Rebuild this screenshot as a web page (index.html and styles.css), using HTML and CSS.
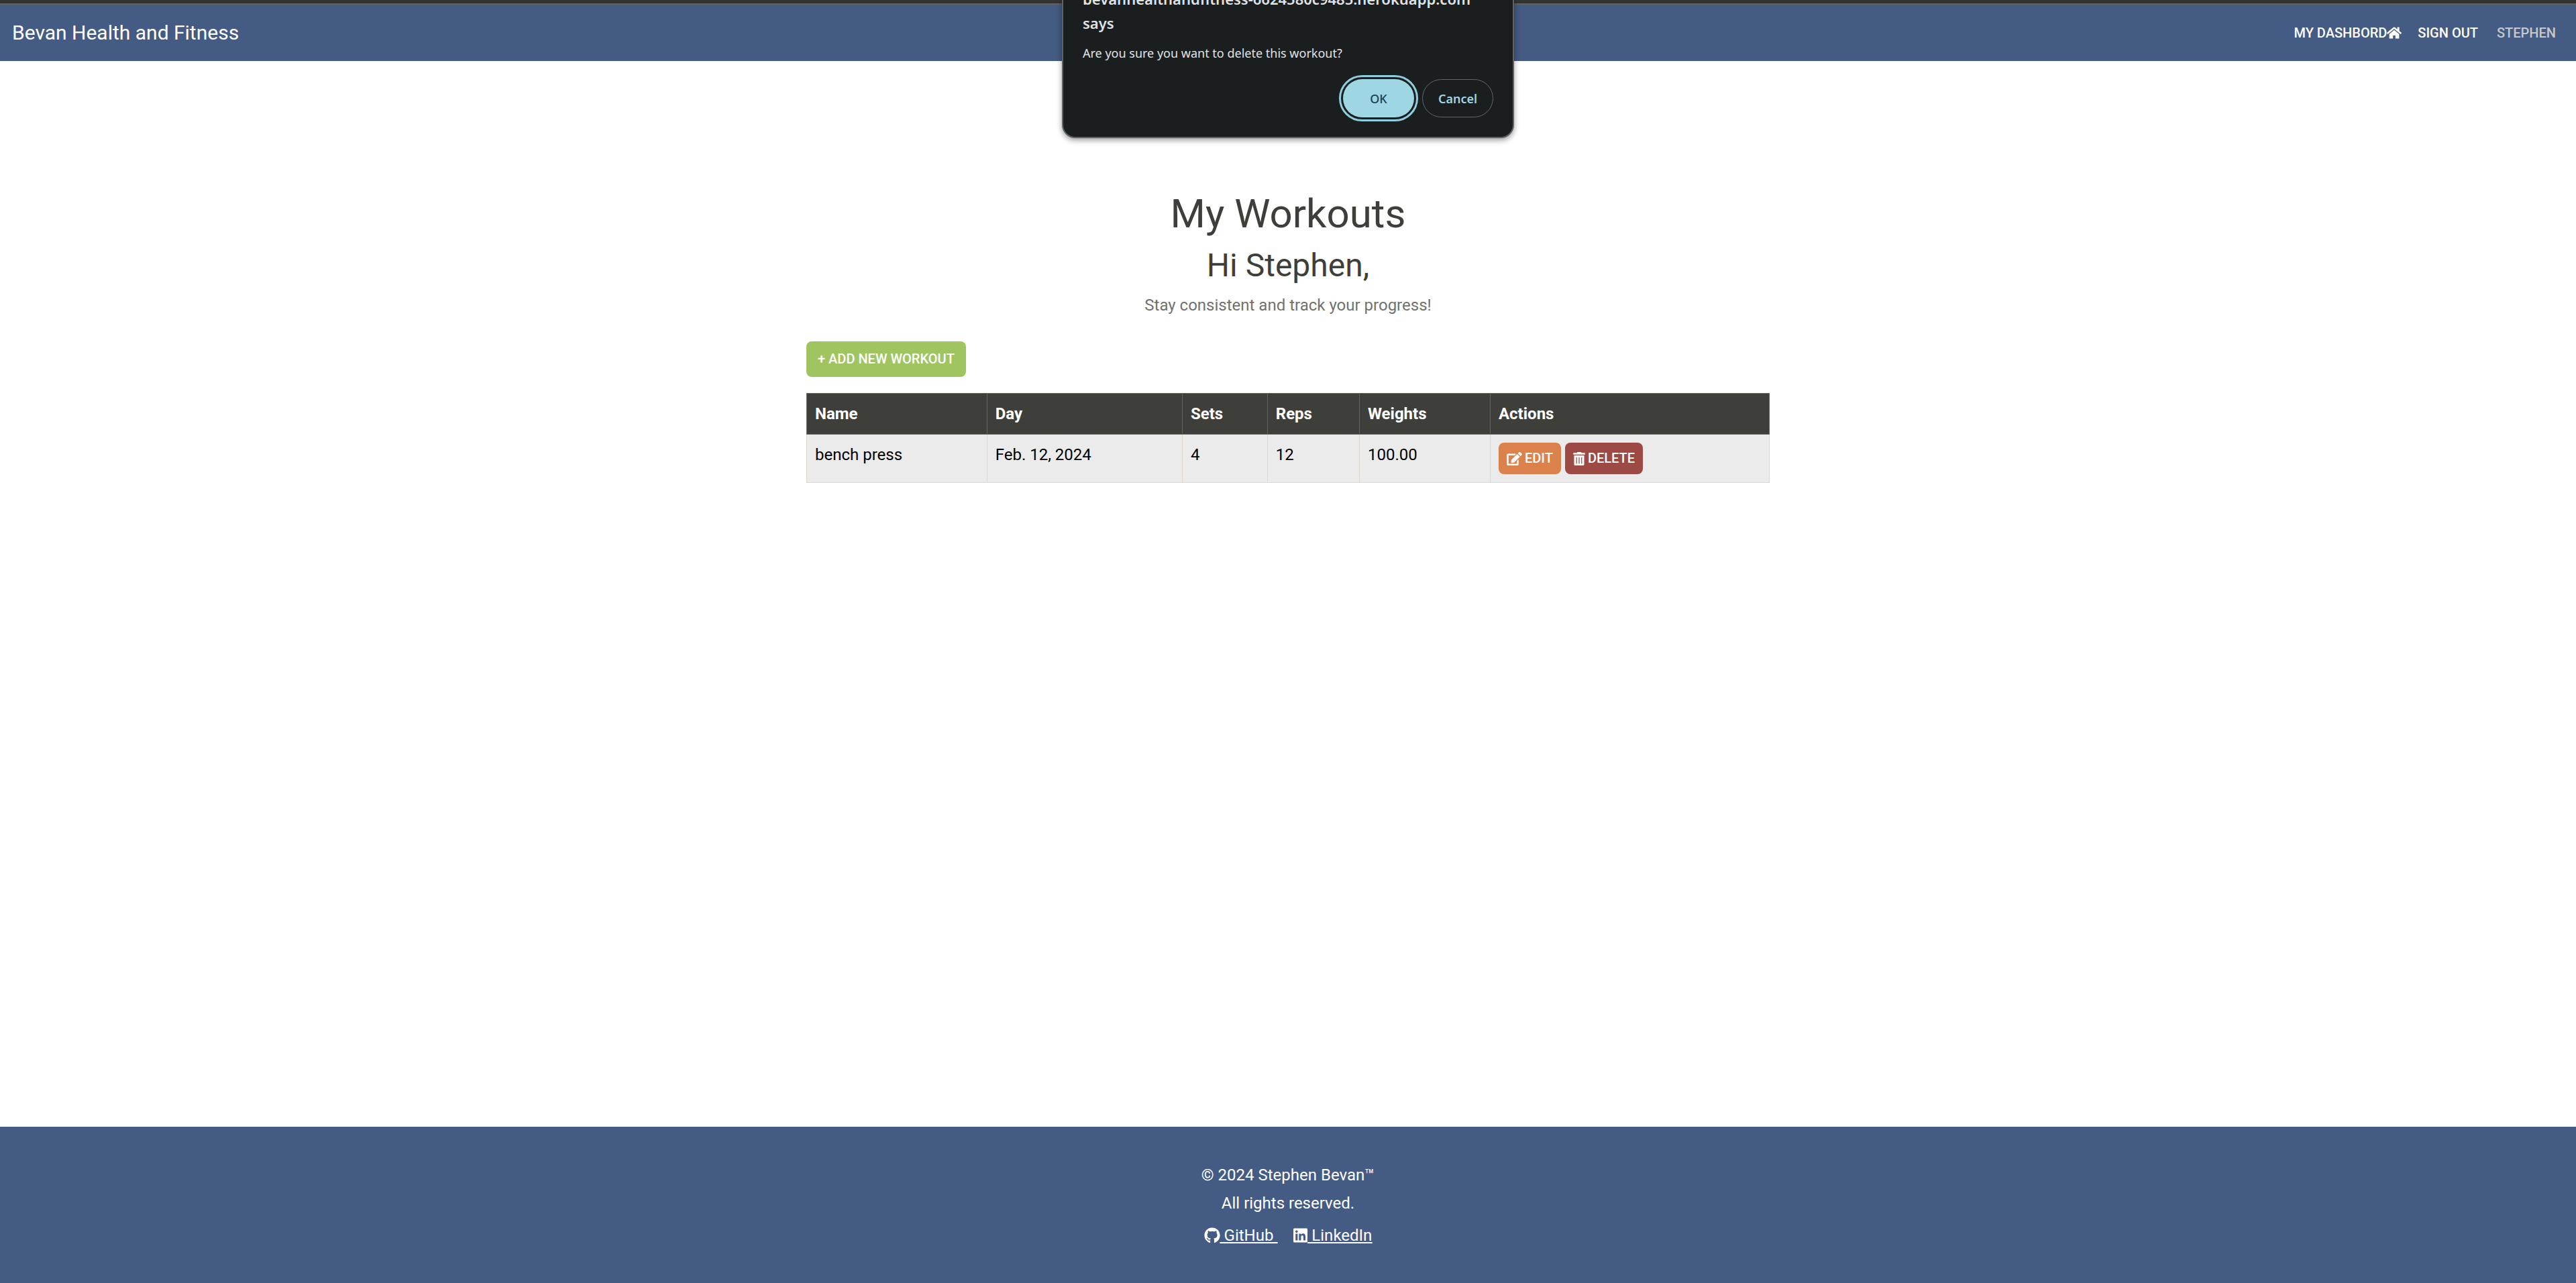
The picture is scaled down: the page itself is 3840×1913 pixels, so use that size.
FILE: index.html
```html
<!DOCTYPE html>
<html lang="en">
<head>
<meta charset="utf-8">
<title>Bevan Health and Fitness</title>
<link rel="stylesheet" href="styles.css">
</head>
<body>
<header class="navbar">
  <a class="brand" href="#">Bevan Health and Fitness</a>
  <nav class="nav-links">
    <a class="nav-link" href="#">MY DASHBORD<svg class="icon icon-home" viewBox="0 0 576 512" aria-hidden="true"><path d="M280.37 148.26L96 300.11V464a16 16 0 0 0 16 16l112.06-.29a16 16 0 0 0 15.92-16V368a16 16 0 0 1 16-16h64a16 16 0 0 1 16 16v95.64a16 16 0 0 0 16 16.05L464 480a16 16 0 0 0 16-16V300L295.67 148.26a12.19 12.19 0 0 0-15.3 0zM571.6 251.47L488 182.56V44.05a12 12 0 0 0-12-12h-56a12 12 0 0 0-12 12v72.61L318.47 43a48 48 0 0 0-61 0L4.34 251.47a12 12 0 0 0-1.6 16.9l25.5 31A12 12 0 0 0 45.15 301l235.22-193.74a12.19 12.19 0 0 1 15.3 0L530.9 301a12 12 0 0 0 16.9-1.6l25.5-31a12 12 0 0 0-1.7-16.93z"/></svg></a>
    <a class="nav-link" href="#">SIGN OUT</a>
    <span class="nav-user">STEPHEN</span>
  </nav>
</header>

<main class="content">
  <h1 class="title">My Workouts</h1>
  <h2 class="greeting">Hi Stephen,</h2>
  <p class="lead">Stay consistent and track your progress!</p>
  <a class="btn btn-add" href="#">+ ADD NEW WORKOUT</a>
  <table class="workouts">
    <thead>
      <tr><th>Name</th><th>Day</th><th>Sets</th><th>Reps</th><th>Weights</th><th>Actions</th></tr>
    </thead>
    <tbody>
      <tr>
        <td>bench press</td><td>Feb. 12, 2024</td><td>4</td><td>12</td><td>100.00</td>
        <td>
          <div class="actions">
            <a class="btn btn-edit" href="#"><svg class="icon icon-edit" viewBox="0 0 576 512" aria-hidden="true"><path d="M402.6 83.2l90.2 90.2c3.8 3.8 3.8 10 0 13.8L274.4 405.6l-92.8 10.3c-12.4 1.4-22.9-9.1-21.5-21.5l10.3-92.8L388.8 83.2c3.8-3.8 10-3.8 13.8 0zm162-22.9l-48.8-48.8c-15.2-15.2-39.9-15.2-55.2 0l-35.4 35.4c-3.8 3.8-3.8 10 0 13.8l90.2 90.2c3.8 3.8 10 3.8 13.8 0l35.4-35.4c15.2-15.3 15.2-40 0-55.2zM384 346.2V448H64V128h229.8c3.2 0 6.2-1.3 8.5-3.5l40-40c7.6-7.6 2.2-20.5-8.5-20.5H48C21.5 64 0 85.5 0 112v352c0 26.500 21.500 48 48 48h352c26.500 0 48-21.500 48-48V306.200c0-10.700-12.900-16-20.500-8.500l-40 40c-2.200 2.300-3.500 5.300-3.500 8.500z"/></svg> EDIT</a>
            <button class="btn btn-delete" type="button"><svg class="icon icon-trash" viewBox="0 0 448 512" aria-hidden="true"><path d="M32 464a48 48 0 0 0 48 48h288a48 48 0 0 0 48-48V128H32zm272-256a16 16 0 0 1 32 0v224a16 16 0 0 1-32 0zm-96 0a16 16 0 0 1 32 0v224a16 16 0 0 1-32 0zm-96 0a16 16 0 0 1 32 0v224a16 16 0 0 1-32 0zM432 32H312l-9.4-18.700A24 24 0 0 0 281.100 0H166.800a23.720 23.720 0 0 0-21.400 13.300L136 32H16A16 16 0 0 0 0 48v32a16 16 0 0 0 16 16h416a16 16 0 0 0 16-16V48a16 16 0 0 0-16-16z"/></svg> DELETE</button>
          </div>
        </td>
      </tr>
    </tbody>
  </table>
</main>

<footer class="footer">
  <p class="footer-line">© 2024 Stephen Bevan™</p>
  <p class="footer-line">All rights reserved.</p>
  <div class="social">
    <a class="social-link" href="#"><svg class="icon icon-github" viewBox="0 0 496 512" aria-hidden="true"><path d="M165.900 397.400c0 2-2.300 3.600-5.200 3.600-3.300.3-5.600-1.300-5.600-3.600 0-2 2.300-3.600 5.200-3.600 3-.3 5.600 1.300 5.600 3.600zm-31.100-4.500c-.7 2 1.300 4.300 4.300 4.900 2.600 1 5.600 0 6.200-2s-1.300-4.300-4.300-5.200c-2.600-.7-5.500.3-6.200 2.300zm44.200-1.700c-2.900.7-4.900 2.600-4.600 4.900.3 2 2.900 3.300 5.900 2.600 2.900-.7 4.900-2.600 4.600-4.600-.3-1.900-3-3.200-5.900-2.900zM244.800 8C106.100 8 0 113.300 0 252c0 110.900 69.800 205.800 169.500 239.200 12.800 2.300 17.300-5.600 17.300-12.100 0-6.200-.3-40.400-.3-61.400 0 0-70 15-84.700-29.800 0 0-11.400-29.100-27.800-36.600 0 0-22.900-15.700 1.600-15.400 0 0 24.900 2 38.600 25.800 21.900 38.600 58.600 27.500 72.900 20.900 2.300-16 8.800-27.100 16-33.700-55.900-6.200-112.300-14.300-112.300-110.500 0-27.500 7.600-41.300 23.600-58.900-2.600-6.500-11.100-33.300 2.600-67.900 20.900-6.500 69 27 69 27 20-5.600 41.500-8.500 62.800-8.500s42.800 2.900 62.800 8.500c0 0 48.100-33.600 69-27 13.700 34.700 5.200 61.400 2.600 67.900 16 17.700 25.800 31.500 25.800 58.900 0 96.500-58.900 104.200-114.800 110.500 9.200 7.900 17 22.900 17 46.400 0 33.700-.3 75.400-.3 83.600 0 6.500 4.600 14.400 17.300 12.100C428.200 457.800 496 362.900 496 252 496 113.300 383.500 8 244.800 8z"/></svg><span class="social-text"> GitHub </span></a>
    <a class="social-link" href="#"><svg class="icon icon-linkedin" viewBox="0 0 448 512" aria-hidden="true"><path d="M416 32H31.900C14.300 32 0 46.500 0 64.300v383.400C0 465.500 14.300 480 31.900 480H416c17.600 0 32-14.500 32-32.300V64.300c0-17.800-14.400-32.300-32-32.300zM135.400 416H69V202.200h66.500V416zm-33.200-243c-21.300 0-38.500-17.300-38.500-38.500S80.900 96 102.200 96c21.200 0 38.500 17.300 38.500 38.500 0 21.300-17.200 38.500-38.500 38.500zm282.100 243h-66.400V312c0-24.800-.5-56.700-34.500-56.700-34.600 0-39.900 27-39.900 54.900V416h-66.400V202.200h63.700v29.200h.9c8.900-16.800 30.600-34.500 62.900-34.500 67.200 0 79.700 44.300 79.700 101.900V416z"/></svg><span class="social-text"> LinkedIn</span></a>
  </div>
</footer>

<div class="dialog" role="alertdialog" aria-labelledby="dialog-title" aria-describedby="dialog-text">
  <h2 class="dialog-title" id="dialog-title">bevanhealthandfitness-6624580c9485.herokuapp.com says</h2>
  <p class="dialog-text" id="dialog-text">Are you sure you want to delete this workout?</p>
  <div class="dialog-buttons">
    <button class="dialog-btn dialog-ok" type="button">OK</button>
    <button class="dialog-btn dialog-cancel" type="button">Cancel</button>
  </div>
</div>
</body>
</html>
```
FILE: styles.css
```css
* {
  box-sizing: border-box;
}

body {
  display: flex;
  flex-direction: column;
  min-height: 100vh;
  margin: 0;
  background: #fff;
  color: #000;
  font-family: Roboto, "Liberation Sans", sans-serif;
  font-size: 24px;
  line-height: 36px;
}

h1, h2, p {
  margin: 0;
  font-weight: 400;
}

.icon {
  fill: currentColor;
  flex: none;
}

/* Top bar */
.navbar {
  display: flex;
  align-items: center;
  justify-content: space-between;
  height: 91px;
  padding: 2px 30px 0 18px;
  border-top: 5px solid #333;
  background: #445b83;
  box-shadow: inset 0 2px #62625f;
}

.brand {
  color: #fff;
  font-size: 30px;
  text-decoration: none;
}

.nav-links {
  display: flex;
  align-items: center;
  gap: 24px;
  font-size: 20px;
  font-weight: 500;
}

.nav-link {
  display: flex;
  align-items: center;
  color: #fff;
  text-decoration: none;
}

.icon-home {
  width: 22px;
  height: 20px;
}

.nav-user {
  padding-left: 4px;
  color: #c7c8ca;
}

/* Page content */
.content {
  display: flex;
  flex: 1;
  flex-direction: column;
  width: 100%;
  max-width: 1436px;
  margin: 0 auto;
  padding-top: 192px;
}

.title,
.greeting,
.lead {
  color: #3e3f3a;
  text-align: center;
}

.title {
  margin-bottom: 12px;
  font-size: 60px;
  line-height: 72px;
}

.greeting {
  margin-bottom: 12px;
  font-size: 48px;
  line-height: 58px;
}

.lead {
  margin-bottom: 36px;
  color: #71726e;
}

.btn {
  display: inline-flex;
  align-items: center;
  gap: 4px;
  border: 0;
  border-radius: 8px;
  color: #fff;
  font-family: inherit;
  font-size: 20px;
  font-weight: 500;
  line-height: 29px;
  text-decoration: none;
}

.btn-add {
  align-self: flex-start;
  margin-bottom: 24px;
  padding: 12px 17px;
  background: #a0c560;
}

.workouts {
  width: 100%;
  border-collapse: collapse;
}

.workouts th,
.workouts td {
  padding: 12px;
  border: 1px solid #dfd7ca;
  text-align: left;
  vertical-align: top;
}

.workouts th {
  border-color: #65655f;
  background: #3e3f3a;
  color: #fff;
  font-weight: 700;
}

.workouts td {
  background: #ebebeb;
}

.actions {
  display: flex;
  gap: 6px;
}

.btn-edit,
.btn-delete {
  padding: 9px 12px;
}

.btn-edit {
  background: #db824c;
}

.btn-delete {
  background: #9e4a44;
}

.icon-edit {
  width: 23px;
  height: 20px;
}

.icon-trash {
  width: 18px;
  height: 20px;
}

/* Footer */
.footer {
  display: flex;
  flex-direction: column;
  align-items: center;
  gap: 6px;
  padding: 54px 0 53px;
  background: #445b83;
  color: #fff;
}

.social {
  display: flex;
  gap: 24px;
  padding-top: 6px;
}

.social-link {
  display: flex;
  align-items: center;
  color: #fff;
}

.social-text {
  white-space: pre;
  text-decoration: underline;
}

.icon-github {
  width: 24px;
  height: 24px;
}

.icon-linkedin {
  width: 21px;
  height: 24px;
}

/* Browser confirmation, hanging over the top edge of the page */
.dialog {
  position: absolute;
  top: -39px;
  left: 50%;
  width: 674px;
  padding: 17px 29px 29px;
  border: 2px solid #5f6264;
  border-radius: 20px;
  background: #1a1e1f;
  box-shadow: 0 3px 8px rgba(0, 0, 0, 0.4);
  color: #e0e3e4;
  font-family: "Noto Sans", "Open Sans", sans-serif;
  transform: translateX(-50%);
}

.dialog-title {
  margin-bottom: 9px;
  font-size: 22px;
  font-weight: 600;
  overflow-wrap: break-word;
}

.dialog-text {
  margin-bottom: 21px;
  font-size: 18px;
}

.dialog-buttons {
  display: flex;
  justify-content: flex-end;
  gap: 12px;
}

.dialog-btn {
  width: 106px;
  height: 57px;
  border-radius: 29px;
  font-family: inherit;
  font-size: 18px;
  font-weight: 500;
}

.dialog-ok {
  border: 0;
  outline: 3px solid #90cddc;
  outline-offset: 3px;
  background: #9fd6e3;
  color: #1b4350;
}

.dialog-cancel {
  border: 1px solid #5e686c;
  background: transparent;
  color: #9fd6e3;
  font-weight: 600;
}
```
